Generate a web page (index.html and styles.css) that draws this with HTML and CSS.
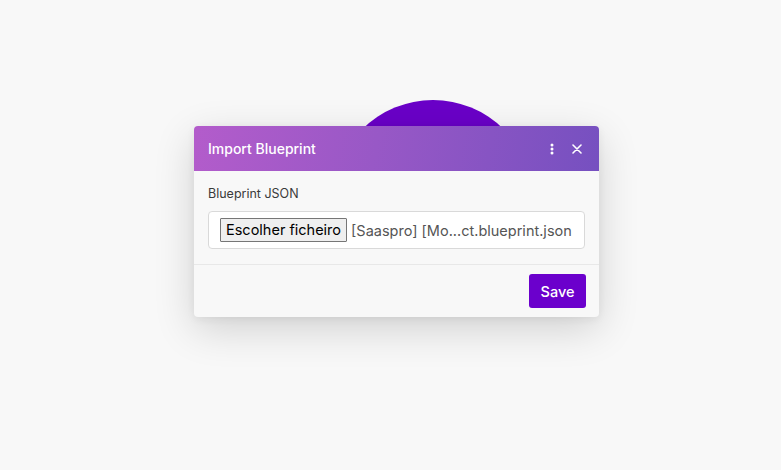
FILE: index.html
```html
<!DOCTYPE html>
<html>
<head>
<meta charset="utf-8">
<link rel="stylesheet" href="styles.css">
</head>
<body>
<div class="stage">
  <div class="blob"></div>
  <div class="dialog">
    <div class="header">
      <span class="title">Import Blueprint</span>
      <div class="actions">
        <svg width="4" height="12" viewBox="0 0 4 12"><circle cx="2" cy="2" r="1.5" fill="#fff"/><circle cx="2" cy="6" r="1.5" fill="#fff"/><circle cx="2" cy="10" r="1.5" fill="#fff"/></svg>
        <svg width="10" height="10" viewBox="0 0 10 10"><path d="M1 1L9 9M9 1L1 9" stroke="#fff" stroke-width="1.6" stroke-linecap="round"/></svg>
      </div>
    </div>
    <div class="body">
      <div class="label">Blueprint JSON</div>
      <div class="field">
        <span class="filebtn">Escolher ficheiro</span>
        <span class="filename">[Saaspro] [Mo...ct.blueprint.json</span>
      </div>
    </div>
    <div class="footer">
      <button class="save">Save</button>
    </div>
  </div>
</div>
</body>
</html>
```
FILE: styles.css
```css
html, body { margin: 0; height: 100%; }
body { background: #f8f8f8; font-family: Inter, "Noto Sans", sans-serif; }
.stage { position: relative; height: 470px; padding: 126px 0 0 194px; box-sizing: border-box; overflow: hidden; }
.blob { position: absolute; left: 333px; top: 100px; width: 200px; height: 200px; border-radius: 50%; background: #6a00c8; }
.dialog { position: relative; width: 405px; background: #f8f8f8; border-radius: 4px; box-shadow: 0 12px 40px rgba(0,0,0,0.16), 0 2px 8px rgba(0,0,0,0.06); overflow: hidden; }
.header { height: 45px; display: flex; align-items: center; justify-content: space-between; padding: 0 17px 0 14px; background: linear-gradient(100deg, #b35ccb 0%, #9858c6 45%, #7650c0 100%); }
.title { color: #fff; font-size: 14px; font-weight: 500; }
.actions { display: flex; align-items: center; gap: 18px; }
.actions svg { display: block; }
.body { padding: 15px 14px 15px 14px; border-bottom: 1px solid #e8e8e8; }
.label { font-size: 12.5px; color: #3a3a3a; line-height: 15px; margin-bottom: 10px; }
.field { height: 38px; box-sizing: border-box; border: 1px solid #d9d9d9; border-radius: 4px; background: #fff; display: flex; align-items: center; padding: 0 11px; gap: 4px; }
.filebtn { font-size: 14.5px; color: #000; background: #efefef; border: 1px solid #767676; padding: 2px 5px; line-height: 18px; border-radius: 1px; }
.filename { font-size: 14.5px; color: #555; white-space: nowrap; }
.footer { display: flex; justify-content: flex-end; padding: 9px 13px 9px; }
.save { font-family: inherit; font-size: 14.5px; font-weight: 500; color: #fff; background: #6b00cc; border: 0; border-radius: 3px; width: 57px; height: 34px; }
```
